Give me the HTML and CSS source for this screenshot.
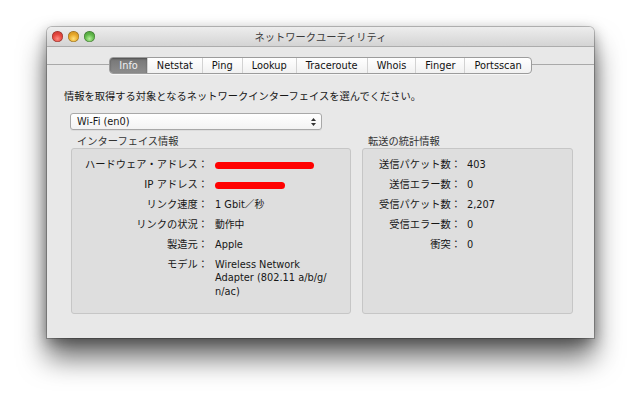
FILE: index.html
```html
<!DOCTYPE html>
<html lang="ja">
<head>
<meta charset="utf-8">
<title>ネットワークユーティリティ</title>
<link rel="stylesheet" href="styles.css">
</head>
<body>
<div class="window">
  <div class="titlebar">
    <div class="lights">
      <span class="light red"></span>
      <span class="light yellow"></span>
      <span class="light green"></span>
    </div>
    <div class="title jp">ネットワークユーティリティ</div>
    <div></div>
  </div>
  <div class="tabbar">
    <div class="tabs">
      <span class="tab selected">Info</span>
      <span class="tab">Netstat</span>
      <span class="tab">Ping</span>
      <span class="tab">Lookup</span>
      <span class="tab">Traceroute</span>
      <span class="tab">Whois</span>
      <span class="tab">Finger</span>
      <span class="tab">Portsscan</span>
    </div>
  </div>
  <p class="instruction jp">情報を取得する対象となるネットワークインターフェイスを選んでください。</p>
  <div class="popup">
    <span class="popup-text">Wi-Fi (en0)</span>
    <svg class="stepper" width="7" height="10" viewBox="0 0 7 10"><path d="M3.5 1 L6 4 L1 4 Z" fill="#333"/><path d="M3.5 9 L6 6 L1 6 Z" fill="#333"/></svg>
  </div>
  <div class="groups">
    <section class="group left">
      <h2 class="group-title jp">インターフェイス情報</h2>
      <div class="box">
        <dl class="grid left-grid">
          <dt class="jp">ハードウェア・アドレス：</dt><dd><span class="redact hw"></span></dd>
          <dt class="jp">IP アドレス：</dt><dd><span class="redact ip"></span></dd>
          <dt class="jp">リンク速度：</dt><dd>1 Gbit／秒</dd>
          <dt class="jp">リンクの状況：</dt><dd>動作中</dd>
          <dt class="jp">製造元：</dt><dd>Apple</dd>
          <dt class="jp">モデル：</dt><dd>Wireless Network<br>Adapter (802.11 a/b/g/<br>n/ac)</dd>
        </dl>
      </div>
    </section>
    <section class="group right">
      <h2 class="group-title jp">転送の統計情報</h2>
      <div class="box">
        <dl class="grid right-grid">
          <dt class="jp">送信パケット数：</dt><dd>403</dd>
          <dt class="jp">送信エラー数：</dt><dd>0</dd>
          <dt class="jp">受信パケット数：</dt><dd>2,207</dd>
          <dt class="jp">受信エラー数：</dt><dd>0</dd>
          <dt class="jp">衝突：</dt><dd>0</dd>
        </dl>
      </div>
    </section>
  </div>
</div>
</body>
</html>
```
FILE: styles.css
```css
* { box-sizing: border-box; }
html, body { margin: 0; padding: 0; background: #fff; }
body {
  width: 640px;
  height: 403px;
  overflow: hidden;
  font-family: "DejaVu Sans", "Noto Sans CJK JP", sans-serif;
  font-size: 9.8px;
  color: #161616;
}
.jp { font-size: 10.25px; }

.window {
  width: 547px;
  height: 311px;
  margin: 27px 0 0 47px;
  background: #e8e8e8;
  border-radius: 5px 5px 0 0;
  box-shadow: 0 20px 28px rgba(0,0,0,0.58), 0 4px 14px rgba(0,0,0,0.35), 0 0 0 1px rgba(0,0,0,0.22);
  display: flex;
  flex-direction: column;
}

.titlebar {
  height: 20px;
  display: grid;
  grid-template-columns: 1fr auto 1fr;
  align-items: center;
  background: linear-gradient(#ededed, #d4d4d4);
  border-bottom: 1px solid #acacac;
  border-radius: 5px 5px 0 0;
}
.lights { display: flex; gap: 5px; padding-left: 5px; }
.light {
  width: 11px; height: 11px; border-radius: 50%;
  box-shadow: inset 0 0 0 0.5px rgba(0,0,0,0.35);
}
.red { background: radial-gradient(circle at 50% 70%, #ff8a80 0%, #e5483f 45%, #b8302a 100%); }
.yellow { background: radial-gradient(circle at 50% 70%, #ffe07a 0%, #e9a92a 45%, #b9801c 100%); }
.green { background: radial-gradient(circle at 50% 70%, #b6f09a 0%, #62b94b 45%, #3d8a2e 100%); }
.title { color: #3a3a3a; line-height: 14px; }

.tabbar {
  margin-top: 10px;
  display: flex;
  justify-content: center;
  background: linear-gradient(#a9a9a9, #a9a9a9) 0 7px / 100% 1px no-repeat;
}
.tabs {
  display: flex;
  border: 1px solid #9c9c9c;
  border-radius: 4px;
  background: linear-gradient(#ffffff, #f1f1f1);
  overflow: hidden;
  box-shadow: 0 1px 0 rgba(255,255,255,0.6);
}
.tab {
  line-height: 15px;
  padding: 0 9px;
  color: #111;
  border-left: 1px solid #d2d2d2;
}
.tab:first-child { border-left: none; }
.tab.selected {
  background: linear-gradient(#767676, #8c8c8c);
  color: #f0f0f0;
  box-shadow: inset 0 1px 2px rgba(0,0,0,0.35);
}

.instruction {
  margin: 15px 0 0 17px;
  line-height: 14px;
}

.popup {
  margin: 10px 0 0 23px;
  width: 252px;
  height: 17px;
  border: 1px solid #a8a8a8;
  border-radius: 3px;
  background: linear-gradient(#ffffff, #f3f3f3);
  display: flex;
  align-items: center;
  justify-content: space-between;
  padding: 0 4px 0 6px;
  box-shadow: 0 1px 0 rgba(0,0,0,0.05);
}
.popup-text { line-height: 14px; }

.groups {
  display: flex;
  gap: 11px;
  margin: 4px 0 0 24px;
}
.group { display: flex; flex-direction: column; }
.group.left { width: 280px; }
.group.right { width: 211px; }
.group-title {
  margin: 0;
  padding-left: 6px;
  font-weight: normal;
  line-height: 14px;
  color: #333;
}
.box {
  height: 166px;
  background: #dedede;
  border: 1px solid #c6c6c6;
  border-radius: 3px;
  padding-top: 8.5px;
}
.grid {
  margin: 0;
  display: grid;
  row-gap: 6.6px;
  line-height: 13.5px;
}
.left-grid { grid-template-columns: 136px 1fr; column-gap: 7px; }
.right-grid { grid-template-columns: 98px 1fr; column-gap: 6px; }
dt { text-align: right; white-space: nowrap; color: #161616; }
dd { margin: 0; white-space: nowrap; }

.redact {
  display: inline-block;
  height: 7px;
  background: #ff0000;
  border-radius: 4px;
  vertical-align: -1px;
}
.redact.hw { width: 99px; }
.redact.ip { width: 70px; }
```
